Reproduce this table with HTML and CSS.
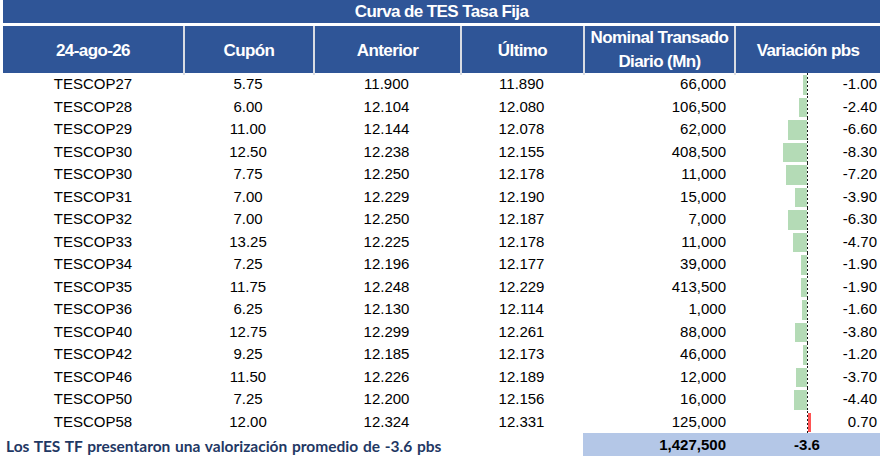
FILE: index.html
```html
<!DOCTYPE html>
<html lang="es">
<head>
<meta charset="utf-8">
<title>Curva de TES Tasa Fija</title>
<link rel="stylesheet" href="styles.css">
</head>
<body>
<div class="sheet">
  <div class="title">Curva de TES Tasa Fija</div>
  <div class="grid head">
    <div class="hc">24-ago-26</div>
    <div class="hc">Cupón</div>
    <div class="hc">Anterior</div>
    <div class="hc">Último</div>
    <div class="hc two">Nominal Transado<br>Diario (Mn)</div>
    <div class="hc">Variación pbs</div>
  </div>
  <div class="body">
    <div class="grid row"><div class="c">TESCOP27</div><div class="c">5.75</div><div class="c">11.900</div><div class="c">11.890</div><div class="c r">66,000</div><div class="var"><div class="neg"><div class="bar" style="width:3.7px"></div></div><div class="axis"></div><div class="pos"><span class="val">-1.00</span></div></div></div>
    <div class="grid row"><div class="c">TESCOP28</div><div class="c">6.00</div><div class="c">12.104</div><div class="c">12.080</div><div class="c r">106,500</div><div class="var"><div class="neg"><div class="bar" style="width:7.7px"></div></div><div class="axis"></div><div class="pos"><span class="val">-2.40</span></div></div></div>
    <div class="grid row"><div class="c">TESCOP29</div><div class="c">11.00</div><div class="c">12.144</div><div class="c">12.078</div><div class="c r">62,000</div><div class="var"><div class="neg"><div class="bar" style="width:19.5px"></div></div><div class="axis"></div><div class="pos"><span class="val">-6.60</span></div></div></div>
    <div class="grid row"><div class="c">TESCOP30</div><div class="c">12.50</div><div class="c">12.238</div><div class="c">12.155</div><div class="c r">408,500</div><div class="var"><div class="neg"><div class="bar" style="width:24.3px"></div></div><div class="axis"></div><div class="pos"><span class="val">-8.30</span></div></div></div>
    <div class="grid row"><div class="c">TESCOP30</div><div class="c">7.75</div><div class="c">12.250</div><div class="c">12.178</div><div class="c r">11,000</div><div class="var"><div class="neg"><div class="bar" style="width:21.2px"></div></div><div class="axis"></div><div class="pos"><span class="val">-7.20</span></div></div></div>
    <div class="grid row"><div class="c">TESCOP31</div><div class="c">7.00</div><div class="c">12.229</div><div class="c">12.190</div><div class="c r">15,000</div><div class="var"><div class="neg"><div class="bar" style="width:11.9px"></div></div><div class="axis"></div><div class="pos"><span class="val">-3.90</span></div></div></div>
    <div class="grid row"><div class="c">TESCOP32</div><div class="c">7.00</div><div class="c">12.250</div><div class="c">12.187</div><div class="c r">7,000</div><div class="var"><div class="neg"><div class="bar" style="width:18.7px"></div></div><div class="axis"></div><div class="pos"><span class="val">-6.30</span></div></div></div>
    <div class="grid row"><div class="c">TESCOP33</div><div class="c">13.25</div><div class="c">12.225</div><div class="c">12.178</div><div class="c r">11,000</div><div class="var"><div class="neg"><div class="bar" style="width:14.2px"></div></div><div class="axis"></div><div class="pos"><span class="val">-4.70</span></div></div></div>
    <div class="grid row"><div class="c">TESCOP34</div><div class="c">7.25</div><div class="c">12.196</div><div class="c">12.177</div><div class="c r">39,000</div><div class="var"><div class="neg"><div class="bar" style="width:6.3px"></div></div><div class="axis"></div><div class="pos"><span class="val">-1.90</span></div></div></div>
    <div class="grid row"><div class="c">TESCOP35</div><div class="c">11.75</div><div class="c">12.248</div><div class="c">12.229</div><div class="c r">413,500</div><div class="var"><div class="neg"><div class="bar" style="width:6.3px"></div></div><div class="axis"></div><div class="pos"><span class="val">-1.90</span></div></div></div>
    <div class="grid row"><div class="c">TESCOP36</div><div class="c">6.25</div><div class="c">12.130</div><div class="c">12.114</div><div class="c r">1,000</div><div class="var"><div class="neg"><div class="bar" style="width:5.4px"></div></div><div class="axis"></div><div class="pos"><span class="val">-1.60</span></div></div></div>
    <div class="grid row"><div class="c">TESCOP40</div><div class="c">12.75</div><div class="c">12.299</div><div class="c">12.261</div><div class="c r">88,000</div><div class="var"><div class="neg"><div class="bar" style="width:11.6px"></div></div><div class="axis"></div><div class="pos"><span class="val">-3.80</span></div></div></div>
    <div class="grid row"><div class="c">TESCOP42</div><div class="c">9.25</div><div class="c">12.185</div><div class="c">12.173</div><div class="c r">46,000</div><div class="var"><div class="neg"><div class="bar" style="width:4.3px"></div></div><div class="axis"></div><div class="pos"><span class="val">-1.20</span></div></div></div>
    <div class="grid row"><div class="c">TESCOP46</div><div class="c">11.50</div><div class="c">12.226</div><div class="c">12.189</div><div class="c r">12,000</div><div class="var"><div class="neg"><div class="bar" style="width:11.3px"></div></div><div class="axis"></div><div class="pos"><span class="val">-3.70</span></div></div></div>
    <div class="grid row"><div class="c">TESCOP50</div><div class="c">7.25</div><div class="c">12.200</div><div class="c">12.156</div><div class="c r">16,000</div><div class="var"><div class="neg"><div class="bar" style="width:13.3px"></div></div><div class="axis"></div><div class="pos"><span class="val">-4.40</span></div></div></div>
    <div class="grid row"><div class="c">TESCOP58</div><div class="c">12.00</div><div class="c">12.324</div><div class="c">12.331</div><div class="c r">125,000</div><div class="var"><div class="neg"></div><div class="axis"></div><div class="pos"><div class="bar up" style="width:2.5px"></div><span class="val">0.70</span></div></div></div>
  </div>
  <div class="grid foot">
    <div class="note">Los TES TF presentaron una valorización promedio de -3.6 pbs</div>
    <div class="sum r">1,427,500</div>
    <div class="sum mid">-3.6</div>
  </div>
</div>
</body>
</html>
```

FILE: styles.css
```css
* { box-sizing: border-box; }

html, body {
  margin: 0;
  padding: 0;
  background: #ffffff;
}

body {
  font-family: "Liberation Sans", Arial, sans-serif;
  color: #000;
}

.sheet {
  width: 880px;
  padding-left: 3px;
}

.title {
  height: 23px;
  background: #2f5597;
  color: #fff;
  font-weight: bold;
  font-size: 17px;
  letter-spacing: -0.6px;
  line-height: 23px;
  text-align: center;
  margin-bottom: 3px;
}

.grid {
  display: grid;
  grid-template-columns: 180px 130px 147px 123px 151px 146px;
}

.head {
  height: 47px;
  background: #2f5597;
}

.hc {
  display: flex;
  align-items: center;
  justify-content: center;
  text-align: center;
  color: #fff;
  font-weight: bold;
  font-size: 17px;
  letter-spacing: -0.6px;
  border-left: 2px solid #d9dce3;
}

.hc:first-child { border-left: none; }

.hc.two { line-height: 24px; padding-bottom: 1px; }

.row { height: 22.5px; }

.c {
  font-size: 15px;
  line-height: 22.5px;
  text-align: center;
  white-space: nowrap;
}

.c.r { text-align: right; padding-right: 8px; }

.var {
  display: grid;
  grid-template-columns: 73px 1px 1fr;
}

.neg {
  display: flex;
  justify-content: flex-end;
  align-items: flex-start;
}

.bar {
  margin-top: 2px;
  height: 19.5px;
  background: #b4dbb6;
}

.bar.up { background: #ff5454; }

.axis {
  background: repeating-linear-gradient(to bottom, #1a1a1a 0 2px, transparent 2px 4px);
}

.pos {
  display: flex;
  align-items: flex-start;
}

.val {
  margin-left: auto;
  padding-right: 3px;
  font-size: 15px;
  line-height: 22.5px;
}

.foot { height: 23px; }

.note {
  grid-column: 1 / span 4;
  font-family: "Lato", "Open Sans", sans-serif;
  font-weight: bold;
  font-size: 15.5px;
  word-spacing: 1px;
  color: #1f3864;
  line-height: 23px;
  padding-left: 3px;
  padding-top: 2px;
  white-space: nowrap;
}

.sum {
  background: #b4c7e7;
  font-weight: bold;
  font-size: 15px;
  line-height: 23px;
}

.sum.r { text-align: right; padding-right: 8px; }

.sum.mid { text-align: center; }
```
